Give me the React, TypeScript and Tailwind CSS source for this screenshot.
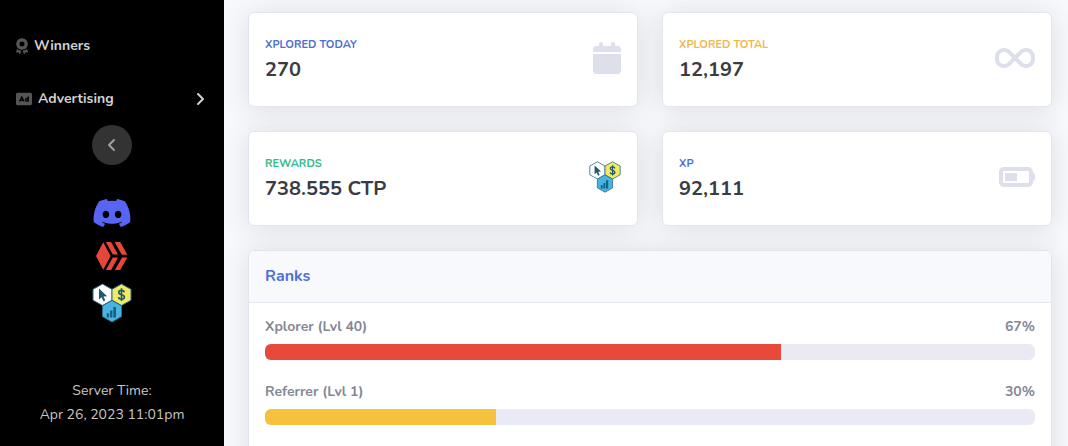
import type { ReactNode } from 'react';
import {
  FaAngleLeft,
  FaAngleRight,
  FaAward,
  FaBatteryHalf,
  FaCalendar,
  FaDiscord,
  FaInfinity,
  FaRectangleAd,
} from 'react-icons/fa6';

interface StatCardProps {
  label: string;
  value: string;
  labelClass: string;
  icon: ReactNode;
}

interface Rank {
  name: string;
  percent: number;
  barClass: string;
}

const RANKS: Rank[] = [
  { name: 'Xplorer (Lvl 40)', percent: 67, barClass: 'bg-[#e74a3b]' },
  { name: 'Referrer (Lvl 1)', percent: 30, barClass: 'bg-[#f6c23e]' },
];

function HiveLogo({ className }: { className?: string }) {
  return (
    <svg viewBox="0 0 32 28" className={className} fill="#e5473a" aria-hidden="true">
      <path d="M0 14 7.2 0.3 14.6 14 7.2 27.7Z" />
      <path d="M9.8 0h5.2l7 12.6h-5.2Z" />
      <path d="M16.8 15.6H22L15.2 28H9.8Z" />
      <path d="M18.6 0h5.6l7.2 12.8h-5.6Z" />
      <path d="M26 15.4h5.4L24.2 28h-5.4Z" />
    </svg>
  );
}

function CtpLogo({ className }: { className?: string }) {
  return (
    <svg viewBox="0 0 40 40" className={className} aria-hidden="true">
      <g stroke="#2b6c85" strokeWidth="1" strokeLinejoin="round">
        <path d="M10.5 1 20 6.3v10.9l-9.5 5.3L1 17.2V6.3Z" fill="#fff" />
        <path d="M29.5 1 39 6.3v10.9l-9.5 5.3-9.5-5.3V6.3Z" fill="#f1ea62" />
        <path d="M20 17.4l9.5 5.4v10.8L20 39l-9.5-5.4V22.8Z" fill="#48b4e4" />
      </g>
      <path d="M7 5.5v11l2.6-2.2 1.8 4 1.9-.9-1.8-3.9 3.6-.3Z" fill="#1d5a6b" />
      <path
        d="M32.4 9.2c-.3-1.2-1.4-1.8-2.9-1.8-1.7 0-2.8.8-2.8 2.1 0 3 5.7 1.5 5.7 4.5 0 1.4-1.2 2.2-2.9 2.2s-2.8-.8-3-2.1M29.5 5.3v12.8"
        fill="none"
        stroke="#1d5a6b"
        strokeWidth="1.6"
      />
      <path d="M14.7 30.2h2.4v4.3h-2.4ZM18 27.5h2.4v7H18ZM21.3 24h2.7v10.5h-2.7Z" fill="#17607f" />
    </svg>
  );
}

function StatCard({ label, value, labelClass, icon }: StatCardProps) {
  return (
    <div className="flex items-center justify-between rounded-md border border-[#e3e6f0] bg-white px-4 py-6 shadow-[0_2px_28px_0_rgba(58,59,69,0.15)]">
      <div>
        <div className={`mb-1.5 text-[11px] leading-[15px] font-bold uppercase ${labelClass}`}>
          {label}
        </div>
        <div className="text-xl leading-6 font-bold text-[#3a3b45]">{value}</div>
      </div>
      <div className="pb-1 text-[#dddfeb]">{icon}</div>
    </div>
  );
}

function Sidebar() {
  return (
    <aside className="flex w-56 shrink-0 flex-col items-center bg-black pt-[19px]">
      <nav className="w-full text-sm leading-[21px] font-bold text-[#d2d2d2]">
        <a href="#winners" className="flex items-center p-4">
          <FaAward className="mr-1.5 h-4 w-3 text-[#555]" />
          Winners
        </a>
        <a href="#advertising" className="flex items-center p-4">
          <FaRectangleAd className="mr-1.5 h-4 w-4 text-[#555]" />
          Advertising
          <FaAngleRight className="ml-auto h-4 w-4" />
        </a>
      </nav>
      <button
        type="button"
        aria-label="Collapse sidebar"
        className="flex h-10 w-10 items-center justify-center rounded-full bg-[#333] text-[#a0a0a0]"
      >
        <FaAngleLeft className="h-4 w-4" />
      </button>
      <div className="mt-7 flex flex-col items-center">
        <a href="#discord" aria-label="Discord">
          <FaDiscord className="h-10 w-10 text-[#5865f2]" />
        </a>
        <a href="#hive" aria-label="Hive" className="mt-2">
          <HiveLogo className="h-[30px] w-8" />
        </a>
        <a href="#ctp" aria-label="CTP" className="mt-3">
          <CtpLogo className="h-10 w-10" />
        </a>
      </div>
      <p className="mt-14 text-center text-sm leading-6 text-[#c8c8c8]">
        Server Time:
        <br />
        Apr 26, 2023 11:01pm
      </p>
    </aside>
  );
}

export default function App() {
  return (
    <div className="flex h-screen overflow-hidden bg-[#f8f9fc] font-[Nunito,'Open_Sans',sans-serif]">
      <Sidebar />
      <main className="min-w-0 flex-1 pt-3 pr-4 pl-6">
        <div className="grid grid-cols-2 gap-6">
          <StatCard
            label="Xplored Today"
            value="270"
            labelClass="text-[#4e6fd4]"
            icon={<FaCalendar className="h-8 w-7" />}
          />
          <StatCard
            label="Xplored Total"
            value="12,197"
            labelClass="text-[#f0b94f]"
            icon={<FaInfinity className="h-8 w-10" />}
          />
          <StatCard
            label="Rewards"
            value="738.555 CTP"
            labelClass="text-[#36bb84]"
            icon={<CtpLogo className="h-8 w-8" />}
          />
          <StatCard
            label="XP"
            value="92,111"
            labelClass="text-[#4e6fd4]"
            icon={<FaBatteryHalf className="h-8 w-9" />}
          />
        </div>

        {/* Ranks */}
        <section className="mt-6 h-full rounded-md border border-[#e3e6f0] bg-white shadow-[0_2px_28px_0_rgba(58,59,69,0.15)]">
          <h2 className="rounded-t-md border-b border-[#e3e6f0] bg-[#f8f9fc] p-4 text-base leading-[19px] font-bold text-[#4e6fd4]">
            Ranks
          </h2>
          <div className="p-4">
            {RANKS.map((rank) => (
              <div key={rank.name} className="mb-6">
                <div className="mb-2.5 flex justify-between text-sm leading-[15px] font-bold text-[#858796]">
                  <span>{rank.name}</span>
                  <span>{rank.percent}%</span>
                </div>
                <div className="h-4 overflow-hidden rounded-md bg-[#eaeaf4]">
                  <div className={`h-full ${rank.barClass}`} style={{ width: `${rank.percent}%` }} />
                </div>
              </div>
            ))}
          </div>
        </section>
      </main>
    </div>
  );
}
